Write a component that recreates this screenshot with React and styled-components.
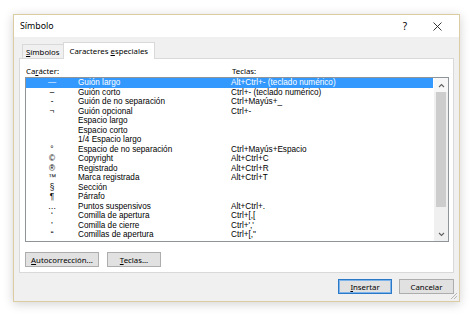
import styled, { createGlobalStyle } from 'styled-components'

const Global = createGlobalStyle`
  html, body {
    margin: 0;
    padding: 0;
    background: #ffffff;
  }
  body {
    font-family: 'Noto Sans', 'Open Sans', sans-serif;
    color: #000;
  }
`

const Page = styled.div`
  width: 474px;
  height: 316px;
  padding: 14px 0 0 13px;
  box-sizing: border-box;
`

const Dialog = styled.div`
  position: relative;
  width: 447px;
  height: 288px;
  box-sizing: border-box;
  border: 1px solid #dccca4;
  background: #f0f0f0;
  box-shadow: 0 2px 10px rgba(0, 0, 0, 0.18);
  display: flex;
  flex-direction: column;
`

const TitleBar = styled.div`
  height: 22px;
  background: #fff;
  display: flex;
  align-items: center;
  padding: 0 10px 0 6px;
  font-size: 8.8px;
  flex-shrink: 0;
`

const Title = styled.div`
  flex: 1;
`

const TitleButton = styled.div`
  width: 24px;
  display: flex;
  justify-content: center;
  align-items: center;
  font-size: 10px;
  margin-left: ${p => p.$gap || 0}px;
`

const Body = styled.div`
  flex: 1;
  display: flex;
  flex-direction: column;
  padding: 4px 5px 0 5px;
`

const TabRow = styled.div`
  display: flex;
  align-items: flex-end;
  height: 17px;
  padding-left: 3px;
`

const Tab = styled.div`
  height: ${p => (p.$active ? 17 : 14)}px;
  box-sizing: border-box;
  padding: 0 ${p => (p.$active ? 6 : 3)}px;
  display: flex;
  align-items: center;
  font-size: 7.8px;
  background: ${p => (p.$active ? '#fff' : '#f0f0f0')};
  border: 1px solid #d9d9d9;
  border-bottom: none;
  border-right: ${p => (p.$active ? '1px solid #d9d9d9' : 'none')};
  margin-bottom: ${p => (p.$active ? -1 : 0)}px;
  position: relative;
  z-index: ${p => (p.$active ? 2 : 1)};
`

const Panel = styled.div`
  height: 215px;
  box-sizing: border-box;
  background: #fff;
  border: 1px solid #d9d9d9;
  padding: 5px 4px 0 5px;
  display: flex;
  flex-direction: column;
`

const Labels = styled.div`
  display: flex;
  height: 13px;
  align-items: center;
  font-size: 7.8px;
  padding-left: 1px;
`

const Label = styled.div`
  width: ${p => p.$w}px;
`

const ListBox = styled.div`
  height: 165px;
  box-sizing: border-box;
  border: 1px solid #8f949b;
  display: flex;
`

const Rows = styled.div`
  flex: 1;
`

const Row = styled.div`
  display: flex;
  height: 9.5px;
  align-items: center;
  font-family: 'Liberation Sans', Arial, sans-serif;
  font-size: 8.2px;
  white-space: nowrap;
  background: ${p => (p.$selected ? '#3399ff' : 'transparent')};
  color: ${p => (p.$selected ? '#fff' : '#000')};
  margin-right: 1px;
`

const Sym = styled.div`
  width: 52px;
  text-align: center;
`

const Name = styled.div`
  width: 153px;
`

const Keys = styled.div`
  flex: 1;
`

const Scrollbar = styled.div`
  width: 14px;
  background: #f0f0f0;
  display: flex;
  flex-direction: column;
  align-items: center;
`

const Arrow = styled.div`
  height: 14px;
  width: 14px;
  display: flex;
  align-items: center;
  justify-content: center;
  background: ${p => (p.$light ? '#f7f7f7' : '#f0f0f0')};
`

const Track = styled.div`
  flex: 1;
  width: 100%;
  display: flex;
  flex-direction: column;
  align-items: center;
`

const Thumb = styled.div`
  width: 10px;
  height: 115px;
  background: #cdcdcd;
`

const ButtonRow = styled.div`
  display: flex;
  gap: 8px;
  margin-top: 10px;
`

const Button = styled.div`
  width: ${p => p.$w}px;
  height: 15px;
  box-sizing: border-box;
  display: flex;
  align-items: center;
  justify-content: center;
  font-size: 7.8px;
  background: #e1e1e1;
  border: 1px solid ${p => (p.$default ? '#2a78c8' : '#adadad')};
  box-shadow: ${p => (p.$default ? 'inset 0 0 0 1px #7eb4ea' : 'none')};
`

const Footer = styled.div`
  display: flex;
  justify-content: flex-end;
  gap: 7px;
  padding: 6px 0 0 0;
`

const Grip = styled.svg`
  position: absolute;
  right: 1px;
  bottom: 1px;
`

const rows = [
  ['—', 'Guión largo', 'Alt+Ctrl+- (teclado numérico)'],
  ['–', 'Guión corto', 'Ctrl+- (teclado numérico)'],
  ['-', 'Guión de no separación', 'Ctrl+Mayús+_'],
  ['¬', 'Guión opcional', 'Ctrl+-'],
  ['', 'Espacio largo', ''],
  ['', 'Espacio corto', ''],
  ['', '1/4 Espacio largo', ''],
  ['°', 'Espacio de no separación', 'Ctrl+Mayús+Espacio'],
  ['©', 'Copyright', 'Alt+Ctrl+C'],
  ['®', 'Registrado', 'Alt+Ctrl+R'],
  ['™', 'Marca registrada', 'Alt+Ctrl+T'],
  ['§', 'Sección', ''],
  ['¶', 'Párrafo', ''],
  ['…', 'Puntos suspensivos', 'Alt+Ctrl+.'],
  ['‘', 'Comilla de apertura', 'Ctrl+[,['],
  ['’', 'Comilla de cierre', "Ctrl+','"],
  ['“', 'Comillas de apertura', 'Ctrl+[,"'],
]

function Chevron({ up }) {
  return (
    <svg width="7" height="5" viewBox="0 0 7 5">
      <path
        d={up ? 'M1 4 L3.5 1.5 L6 4' : 'M1 1 L3.5 3.5 L6 1'}
        fill="none"
        stroke="#606060"
        strokeWidth="1.1"
      />
    </svg>
  )
}

export default function App() {
  return (
    <Page>
      <Global />
      <Dialog>
        <TitleBar>
          <Title>Símbolo</Title>
          <TitleButton>?</TitleButton>
          <TitleButton $gap={8}>
            <svg width="9" height="9" viewBox="0 0 9 9">
              <path d="M0.5 0.5 L8.5 8.5 M8.5 0.5 L0.5 8.5" stroke="#222" strokeWidth="0.9" />
            </svg>
          </TitleButton>
        </TitleBar>
        <Body>
          <TabRow>
            <Tab>
              <span><u>S</u>ímbolos</span>
            </Tab>
            <Tab $active>
              <span>Caracteres <u>e</u>speciales</span>
            </Tab>
          </TabRow>
          <Panel>
            <Labels>
              <Label $w={206}>Ca<u>r</u>ácter:</Label>
              <Label>Teclas:</Label>
            </Labels>
            <ListBox>
              <Rows>
                {rows.map((r, i) => (
                  <Row key={i} $selected={i === 0}>
                    <Sym>{r[0]}</Sym>
                    <Name>{r[1]}</Name>
                    <Keys>{r[2]}</Keys>
                  </Row>
                ))}
              </Rows>
              <Scrollbar>
                <Arrow $light>
                  <Chevron up />
                </Arrow>
                <Track>
                  <Thumb />
                </Track>
                <Arrow>
                  <Chevron />
                </Arrow>
              </Scrollbar>
            </ListBox>
            <ButtonRow>
              <Button $w={74}>
                <span><u>A</u>utocorrección...</span>
              </Button>
              <Button $w={54}>
                <span><u>T</u>eclas...</span>
              </Button>
            </ButtonRow>
          </Panel>
          <Footer>
            <Button $w={54} $default>
              <span><u>I</u>nsertar</span>
            </Button>
            <Button $w={55}>Cancelar</Button>
          </Footer>
        </Body>
        <Grip width="9" height="9" viewBox="0 0 9 9">
          <path d="M8 2 L2 8 M8 5 L5 8" stroke="#b8b8b8" strokeWidth="1" />
        </Grip>
      </Dialog>
    </Page>
  )
}
